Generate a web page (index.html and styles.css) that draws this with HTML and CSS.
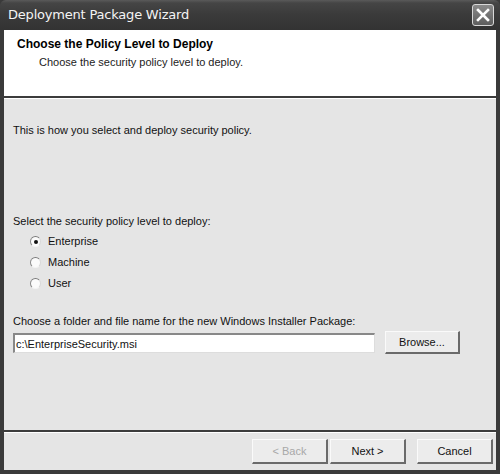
FILE: index.html
```html
<!DOCTYPE html>
<html>
<head>
<meta charset="utf-8">
<link rel="stylesheet" href="styles.css">
</head>
<body>
<div class="window">
  <div class="titlebar">
    <span class="title">Deployment Package Wizard</span>
    <span class="close"><svg width="14" height="14" viewBox="0 0 14 14"><path d="M2 2 L12 12 M12 2 L2 12" stroke="#fff" stroke-width="2.6" stroke-linecap="square"/></svg></span>
  </div>
  <div class="frame">
    <div class="header">
      <div class="h-title">Choose the Policy Level to Deploy</div>
      <div class="h-sub">Choose the security policy level to deploy.</div>
    </div>
    <div class="sep"></div>
    <div class="content">
      <p class="intro">This is how you select and deploy security policy.</p>
      <p class="label">Select the security policy level to deploy:</p>
      <div class="radios">
        <div class="radio"><span class="dot checked"></span><span>Enterprise</span></div>
        <div class="radio"><span class="dot"></span><span>Machine</span></div>
        <div class="radio"><span class="dot"></span><span>User</span></div>
      </div>
      <p class="label2">Choose a folder and file name for the new Windows Installer Package:</p>
      <div class="filerow">
        <div class="input">c:\EnterpriseSecurity.msi</div>
        <div class="btn browse">Browse...</div>
      </div>
    </div>
    <div class="sep"></div>
    <div class="footer">
      <div class="btn disabled">&lt; Back</div>
      <div class="btn next">Next &gt;</div>
      <div class="btn cancel">Cancel</div>
    </div>
  </div>
</div>
</body>
</html>
```

FILE: styles.css
```css
html, body {
  margin: 0;
  padding: 0;
  background: #2e2e2e;
}
.window {
  width: 500px;
  height: 474px;
  display: flex;
  flex-direction: column;
  background: #3a3a3a;
  font-family: "Liberation Sans", Arial, sans-serif;
  font-size: 11px;
  line-height: 14px;
  color: #111;
}
.titlebar {
  height: 30px;
  flex: none;
  display: flex;
  align-items: center;
  justify-content: space-between;
  padding: 0 6px 0 8px;
  background: linear-gradient(#5a5a5a 0, #454545 3px, #3a3a3a 50%, #333 100%);
  border-radius: 6px 6px 0 0;
}
.title {
  color: #f4f4f4;
  font-family: "DejaVu Sans", sans-serif;
  font-size: 13px;
  letter-spacing: -0.2px;
}
.close {
  width: 20px;
  height: 20px;
  border: 1px solid #d8d8d8;
  border-radius: 3px;
  background: linear-gradient(#8a8a8a, #5e5e5e);
  display: flex;
  align-items: center;
  justify-content: center;
}
.frame {
  flex: 1;
  display: flex;
  flex-direction: column;
  margin: 0 4px 4px 4px;
  background: #e5e5e5;
}
.header {
  height: 66px;
  background: #fff;
  padding: 7px 0 0 13px;
  box-sizing: border-box;
}
.h-title {
  font-weight: bold;
  font-size: 12px;
  color: #000;
}
.h-sub {
  margin: 4px 0 0 22px;
  color: #222;
}
.sep {
  height: 1px;
  border-top: 2px solid #3c3c3c;
  background: #fff;
}
.content {
  flex: 1;
  padding: 24px 9px 0 9px;
}
.content p {
  margin: 0;
}
.label {
  margin-top: 77px !important;
}
.radios {
  display: flex;
  flex-direction: column;
  gap: 7px;
  margin: 6px 0 0 17px;
}
.radio {
  display: flex;
  align-items: center;
  gap: 7px;
  height: 14px;
}
.dot {
  width: 11px;
  height: 11px;
  border-radius: 50%;
  background: #fbfbfb;
  border: 1px solid #b8b8b8;
  border-color: #7a7a7a #d8d8d8 #f4f4f4 #8a8a8a;
  position: relative;
  box-sizing: border-box;
}
.dot.checked::after {
  content: "";
  position: absolute;
  left: 3px;
  top: 3px;
  width: 4px;
  height: 4px;
  border-radius: 50%;
  background: #111;
}
.label2 {
  margin-top: 24px !important;
}
.filerow {
  display: flex;
  align-items: center;
  gap: 10px;
  margin-top: 3px;
}
.input {
  width: 362px;
  height: 20px;
  box-sizing: border-box;
  background: #fff;
  border-top: 2px solid #888;
  border-left: 2px solid #888;
  border-right: 1px solid #ddd;
  border-bottom: 1px solid #ddd;
  padding: 2px 0 0 1px;
  line-height: 14px;
}
.btn {
  height: 23px;
  box-sizing: border-box;
  display: flex;
  align-items: center;
  justify-content: center;
  background: #ececec;
  border-top: 1px solid #fafafa;
  border-left: 1px solid #fafafa;
  border-right: 2px solid #6a6a6a;
  border-bottom: 2px solid #6a6a6a;
  color: #111;
}
.browse {
  width: 75px;
}
.footer {
  height: 37px;
  display: flex;
  align-items: center;
  justify-content: flex-end;
  padding: 0 3px 0 0;
}
.footer .btn {
  width: 76px;
  height: 25px;
}
.disabled {
  color: #a8a8a8;
}
.next {
  margin-left: 2px;
}
.cancel {
  margin-left: 11px;
}
```
